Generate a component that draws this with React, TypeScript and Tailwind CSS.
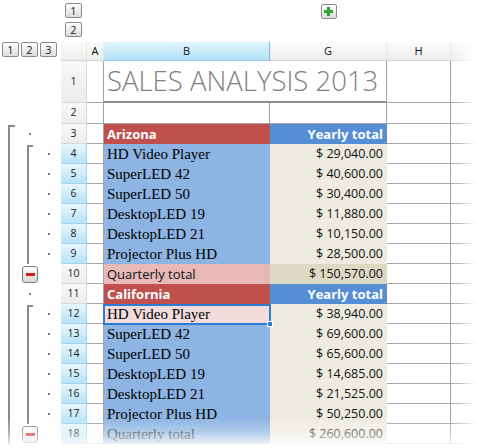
import React from 'react';

type RowKind = 'region' | 'item' | 'total';
type Row = { n: number; kind: RowKind; b: string; g: string; first?: boolean; selected?: boolean; topRegion?: boolean };

const rows: Row[] = [
  { n: 3, kind: 'region', b: 'Arizona', g: 'Yearly total', topRegion: true },
  { n: 4, kind: 'item', b: 'HD Video Player', g: '$ 29,040.00', first: true },
  { n: 5, kind: 'item', b: 'SuperLED 42', g: '$ 40,600.00' },
  { n: 6, kind: 'item', b: 'SuperLED 50', g: '$ 30,400.00' },
  { n: 7, kind: 'item', b: 'DesktopLED 19', g: '$ 11,880.00' },
  { n: 8, kind: 'item', b: 'DesktopLED 21', g: '$ 10,150.00' },
  { n: 9, kind: 'item', b: 'Projector Plus HD', g: '$ 28,500.00' },
  { n: 10, kind: 'total', b: 'Quarterly total', g: '$ 150,570.00' },
  { n: 11, kind: 'region', b: 'California', g: 'Yearly total' },
  { n: 12, kind: 'item', b: 'HD Video Player', g: '$ 38,940.00', first: true, selected: true },
  { n: 13, kind: 'item', b: 'SuperLED 42', g: '$ 69,600.00' },
  { n: 14, kind: 'item', b: 'SuperLED 50', g: '$ 65,600.00' },
  { n: 15, kind: 'item', b: 'DesktopLED 19', g: '$ 14,685.00' },
  { n: 16, kind: 'item', b: 'DesktopLED 21', g: '$ 21,525.00' },
  { n: 17, kind: 'item', b: 'Projector Plus HD', g: '$ 50,250.00' },
  { n: 18, kind: 'total', b: 'Quarterly total', g: '$ 260,600.00' },
];

const UI = "font-['Open_Sans',sans-serif]";
const SERIF = "font-['Liberation_Serif',serif]";

function LevelButton({ label }: { label: string }) {
  return (
    <div
      className={`flex h-[15px] w-[17px] items-center justify-center rounded-[2px] border border-[#8a8a8a] bg-linear-to-b from-white to-[#dcdcdc] text-[11px] leading-none text-[#1a1a1a] ${UI}`}
    >
      {label}
    </div>
  );
}

function MinusButton() {
  return (
    <div className="ml-[3px] mt-[2px] flex h-[17px] w-[16px] items-center justify-center rounded-[3px] border border-[#7d7d7d] bg-linear-to-b from-white to-[#d6d6d6]">
      <div className="h-[3px] w-[9px] bg-[#d21f1f]" />
    </div>
  );
}

function PlusButton() {
  return (
    <div className="relative flex h-[15px] w-[16px] items-center justify-center rounded-[2px] border border-[#8a8a8a] bg-linear-to-b from-white to-[#dcdcdc]">
      <div className="h-[3px] w-[9px] bg-[#2ea32e]" />
      <div className="absolute h-[9px] w-[3px] bg-[#2ea32e]" />
    </div>
  );
}

function Outline({ row }: { row: Row }) {
  const l1 = row.topRegion ? (
    <div className="ml-[8px] mt-[1px] h-[19px] w-[7px] border-l-2 border-t-2 border-[#8b8b8b]" />
  ) : (
    <div className="ml-[8px] h-full w-0 border-l-2 border-[#8b8b8b]" />
  );
  let l2: React.ReactNode = null;
  let l3: React.ReactNode = null;
  if (row.kind === 'region') {
    l2 = <div className="ml-[10px] mt-[9px] h-[2px] w-[2px] bg-[#7a7a7a]" />;
  } else if (row.kind === 'item') {
    l2 = row.first ? (
      <div className="ml-[8px] mt-[1px] h-[19px] w-[6px] border-l-2 border-t-2 border-[#8b8b8b]" />
    ) : (
      <div className="ml-[8px] h-full w-0 border-l-2 border-[#8b8b8b]" />
    );
    l3 = <div className="ml-[8px] mt-[9px] h-[2px] w-[2px] bg-[#7a7a7a]" />;
  } else {
    l2 = <MinusButton />;
  }
  return (
    <div className="flex h-full">
      <div className="h-full w-[19px]">{l1}</div>
      <div className="h-full w-[21px]">{l2}</div>
      <div className="h-full w-[21px]">{l3}</div>
    </div>
  );
}

function RowHeader({ n, blue }: { n: number; blue?: boolean }) {
  return (
    <div
      className={`flex items-center justify-center border-b border-r text-[10.5px] text-[#222] ${UI} ${
        blue
          ? 'border-[#9fd3ee] bg-linear-to-b from-[#e8f7fd] to-[#b7e2f7]'
          : 'border-[#d8d8d8] bg-linear-to-b from-[#f8f8f8] to-[#ececec]'
      }`}
    >
      {n}
    </div>
  );
}

const GRID = 'border-[#a4a4a4]';

function WhiteCell({ right = true }: { right?: boolean }) {
  return <div className={`border-b ${right ? 'border-r' : ''} ${GRID} bg-white`} />;
}

function ColHeader({ label, active, last }: { label: string; active?: boolean; last?: boolean }) {
  return (
    <div
      className={`flex items-center justify-center border-b text-[11px] text-[#111] ${UI} ${last ? '' : 'border-r'} ${
        active
          ? 'border-b-[#9bd0ee] border-r-[#6fbbe6] bg-linear-to-b from-[#e2f5fd] to-[#b3e0f7]'
          : 'border-b-[#d4d4d4] border-r-[#e8e8e8] bg-linear-to-b from-[#fbfbfb] to-[#eeeeee]'
      }`}
    >
      {label}
    </div>
  );
}

function DataRow({ row }: { row: Row }) {
  const isItem = row.kind === 'item';
  let bCls = '';
  let gCls = '';
  if (row.kind === 'region') {
    bCls = `bg-[#c0504d] text-white font-bold text-[13px] ${UI}`;
    gCls = `bg-[#558ed5] text-white font-bold text-[13px] ${UI}`;
  } else if (row.kind === 'item') {
    bCls = `${row.selected ? 'bg-[#f2dcdb]' : 'bg-[#8db4e2]'} text-black text-[15px] ${SERIF}`;
    gCls = `bg-[#eeece1] text-[#111] text-[12.5px] ${UI}`;
  } else if (row.n === 18) {
    bCls = `bg-[#8db4e2] text-[#333] text-[15px] ${SERIF}`;
    gCls = `bg-[#eeece1] text-[#333] text-[12.5px] ${UI}`;
  } else {
    bCls = `bg-[#e6b8b7] text-[#111] text-[13px] ${UI}`;
    gCls = `bg-[#ddd9c4] text-[#111] text-[12.5px] ${UI}`;
  }
  return (
    <>
      <Outline row={row} />
      <RowHeader n={row.n} blue={isItem || row.n === 18} />
      <WhiteCell />
      <div className={`relative flex items-center whitespace-nowrap pl-[3px] leading-none ${bCls}`}>
        {row.b}
        {row.selected && (
          <div className="pointer-events-none absolute -bottom-[1px] -left-[1px] -right-[1px] -top-[0px] z-10 border-2 border-[#2b7cd6]">
            <div className="absolute -bottom-[4px] -right-[4px] h-[6px] w-[6px] border border-white bg-[#2b7cd6]" />
          </div>
        )}
      </div>
      <div className={`flex items-center justify-end whitespace-nowrap pr-[4px] leading-none ${gCls}`}>{row.g}</div>
      <WhiteCell />
      <WhiteCell right={false} />
    </>
  );
}

export default function App() {
  return (
    <div className="relative h-[448px] w-[477px] overflow-hidden bg-white">
      <div className="grid grid-cols-[61px_26px_17px_166px_117px_64px_1fr] grid-rows-[42px_19px_42px_21px_repeat(16,20px)]">
        {/* outline column buttons row */}
        <div />
        <div className="flex flex-col gap-[4px] pl-[4px] pt-[3px]">
          <LevelButton label="1" />
          <LevelButton label="2" />
        </div>
        <div />
        <div />
        <div className="flex justify-center pt-[4px]">
          <PlusButton />
        </div>
        <div />
        <div />

        {/* header row */}
        <div className="flex items-start gap-[2px] pl-[2px]">
          <LevelButton label="1" />
          <LevelButton label="2" />
          <LevelButton label="3" />
        </div>
        <div className="border-b border-r border-b-[#d4d4d4] border-r-[#e4e4e4] bg-linear-to-b from-[#fbfbfb] to-[#eeeeee]" />
        <ColHeader label="A" />
        <ColHeader label="B" active />
        <ColHeader label="G" />
        <ColHeader label="H" />
        <ColHeader label="" last />

        {/* row 1 */}
        <div />
        <RowHeader n={1} />
        <WhiteCell />
        <div
          className={`col-span-2 flex items-center border-b-2 border-r border-b-[#8e8e8e] ${GRID} pl-[3px] text-[27.5px] font-light leading-none text-[#7f7f7f] whitespace-nowrap ${UI}`}
        >
          SALES ANALYSIS 2013
        </div>
        <WhiteCell />
        <WhiteCell right={false} />

        {/* row 2 */}
        <div />
        <RowHeader n={2} />
        <WhiteCell />
        <WhiteCell />
        <WhiteCell />
        <WhiteCell />
        <WhiteCell right={false} />

        {rows.map((r) => (
          <DataRow key={r.n} row={r} />
        ))}
      </div>

      {/* edge fades */}
      <div className="pointer-events-none absolute right-0 top-0 z-20 h-full w-[26px] bg-linear-to-r from-white/0 to-white" />
      <div className="pointer-events-none absolute bottom-0 left-0 right-0 z-20 h-[30px] bg-linear-to-b from-white/0 via-white/35 to-white" />
    </div>
  );
}
